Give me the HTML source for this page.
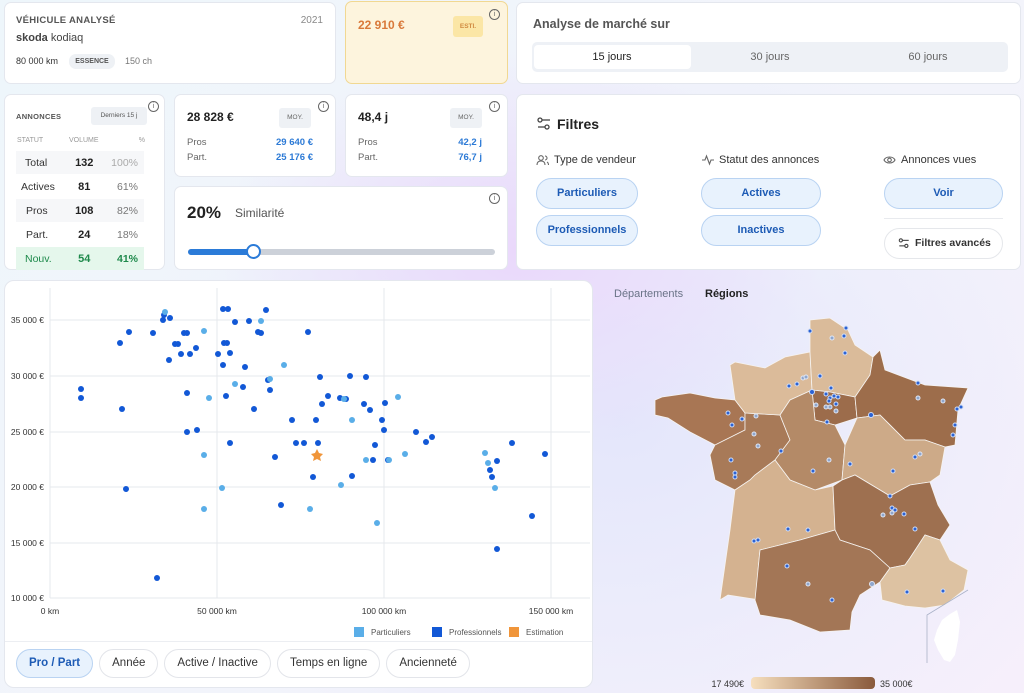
<!DOCTYPE html>
<html><head><meta charset="utf-8">
<style>
*{box-sizing:border-box;margin:0;padding:0}
body{width:1024px;height:693px;overflow:hidden;font-family:"Liberation Sans",sans-serif;color:#222;
background:radial-gradient(ellipse 300px 200px at 520px 250px,#ead8fb 0%,rgba(234,216,251,0) 100%),radial-gradient(ellipse 500px 400px at 620px 420px,#e4e6fb 0%,rgba(228,230,251,0) 100%),linear-gradient(135deg,#eef6fb 0%,#f3f4fb 60%,#f6effb 100%);position:relative}
.card{position:absolute;background:#fff;border:1px solid #e4e7ee;border-radius:7px}
.info{position:absolute;width:11px;height:11px;border:1.2px solid #666;border-radius:50%;font-size:7px;line-height:9px;text-align:center;color:#666}
.lbl{font-size:10px;font-weight:bold;color:#555;letter-spacing:.3px}
.pill{position:absolute;border:1.5px solid #b9d3f2;background:#e8f2fd;color:#1d5bb5;border-radius:16px;font-size:11px;font-weight:bold;text-align:center}
.chip{display:inline-block;border:1.5px solid #e3e5ea;border-radius:16px;font-size:11.5px;color:#333;padding:0 12px;height:29px;line-height:26px;margin-right:6px}
table td{font-size:10.5px;height:23px}
</style></head><body>

<div class="card" style="left:4px;top:2px;width:332px;height:82px">
 <div class="lbl" style="position:absolute;left:11px;top:12px;font-size:9.5px">VÉHICULE ANALYSÉ</div>
 <div style="position:absolute;right:12px;top:12px;font-size:10px;color:#888">2021</div>
 <div style="position:absolute;left:11px;top:29px;font-size:11px;color:#444"><b>skoda</b> kodiaq</div>
 <div style="position:absolute;left:11px;top:53px;font-size:9px;color:#333">80 000 km</div>
 <div style="position:absolute;left:64px;top:51px;height:15px;width:46px;background:#eef1f5;border-radius:7px;font-size:7px;font-weight:bold;color:#555;text-align:center;line-height:15px">ESSENCE</div>
 <div style="position:absolute;left:120px;top:53px;font-size:9px;color:#777">150 ch</div>
</div>
<div class="card" style="left:345px;top:1px;width:163px;height:83px;background:#fdf4dd;border-color:#f1d892">
 <div style="position:absolute;left:12px;top:16px;font-size:12px;font-weight:bold;color:#d9793a">22 910 €</div>
 <div style="position:absolute;left:107px;top:14px;width:30px;height:21px;background:#fbe6a6;border-radius:3px;font-size:6.5px;font-weight:bold;color:#d08a40;text-align:center;line-height:21px">ESTI.</div>
 <div class="info" style="left:143px;top:7px">i</div>
</div>
<div class="card" style="left:516px;top:2px;width:505px;height:82px">
 <div style="position:absolute;left:16px;top:14px;font-size:12.5px;color:#555;font-weight:bold">Analyse de marché sur</div>
 <div style="position:absolute;left:15px;top:39px;width:476px;height:30px;background:#eef1f6;border-radius:5px">
  <div style="position:absolute;left:2px;top:3px;width:157px;height:24px;background:#fff;border-radius:4px"></div>
  <div style="position:absolute;left:0;width:160px;top:9px;text-align:center;font-size:11px;color:#222">15 jours</div>
  <div style="position:absolute;left:158px;width:160px;top:9px;text-align:center;font-size:11px;color:#666">30 jours</div>
  <div style="position:absolute;left:316px;width:160px;top:9px;text-align:center;font-size:11px;color:#666">60 jours</div>
 </div>
</div>

<div class="card" style="left:4px;top:94px;width:161px;height:176px">
 <div class="lbl" style="position:absolute;left:11px;top:17px;font-size:7.5px">ANNONCES</div>
 <div style="position:absolute;left:86px;top:12px;width:56px;height:18px;background:#eef1f5;border-radius:3px;font-size:6.5px;color:#555;text-align:center;line-height:18px">Derniers 15 j</div>
 <div class="info" style="left:143px;top:6px">i</div>
 <div style="position:absolute;left:12px;top:42px;font-size:7px;color:#999;width:128px">STATUT<span style="position:absolute;left:52px">VOLUME</span><span style="position:absolute;right:0">%</span></div>
 <table style="position:absolute;left:11px;top:55px;width:128px;border-collapse:separate;border-spacing:0 1px">
  <tr style="background:#f6f7f9"><td style="padding-left:9px;color:#333">Total</td><td style="font-weight:bold;font-size:11px;text-align:center">132</td><td style="color:#aaa;text-align:right;padding-right:6px">100%</td></tr>
  <tr><td style="padding-left:5px;color:#333">Actives</td><td style="font-weight:bold;font-size:11px;text-align:center">81</td><td style="color:#777;text-align:right;padding-right:6px">61%</td></tr>
  <tr style="background:#f6f7f9"><td style="padding-left:10px;color:#333">Pros</td><td style="font-weight:bold;font-size:11px;text-align:center">108</td><td style="color:#777;text-align:right;padding-right:6px">82%</td></tr>
  <tr><td style="padding-left:10px;color:#333">Part.</td><td style="font-weight:bold;font-size:11px;text-align:center">24</td><td style="color:#777;text-align:right;padding-right:6px">18%</td></tr>
  <tr style="background:#e5f7ec;color:#1f8a4c"><td style="padding-left:9px">Nouv.</td><td style="font-weight:bold;font-size:11px;text-align:center">54</td><td style="text-align:right;padding-right:6px;font-weight:bold">41%</td></tr>
 </table>
</div>
<div class="card" style="left:174px;top:94px;width:162px;height:83px">
 <div style="position:absolute;left:12px;top:15px;font-size:12px;font-weight:bold">28 828 €</div>
 <div style="position:absolute;left:104px;top:13px;width:32px;height:20px;background:#eef1f5;border-radius:3px;font-size:6.5px;color:#666;text-align:center;line-height:20px">MOY.</div>
 <div class="info" style="left:143px;top:6px">i</div>
 <div style="position:absolute;left:12px;top:40px;font-size:9.5px;color:#666;line-height:15px">Pros<br>Part.</div>
 <div style="position:absolute;right:22px;top:40px;font-size:9.5px;color:#2c7ad6;font-weight:bold;line-height:15px;text-align:right">29 640 €<br>25 176 €</div>
</div>
<div class="card" style="left:345px;top:94px;width:163px;height:83px">
 <div style="position:absolute;left:12px;top:15px;font-size:12px;font-weight:bold">48,4 j</div>
 <div style="position:absolute;left:104px;top:13px;width:32px;height:20px;background:#eef1f5;border-radius:3px;font-size:6.5px;color:#666;text-align:center;line-height:20px">MOY.</div>
 <div class="info" style="left:143px;top:6px">i</div>
 <div style="position:absolute;left:12px;top:40px;font-size:9.5px;color:#666;line-height:15px">Pros<br>Part.</div>
 <div style="position:absolute;right:25px;top:40px;font-size:9.5px;color:#2c7ad6;font-weight:bold;line-height:15px;text-align:right">42,2 j<br>76,7 j</div>
</div>
<div class="card" style="left:174px;top:186px;width:334px;height:84px">
 <div style="position:absolute;left:12px;top:16px;font-size:17px;font-weight:bold">20%</div>
 <div style="position:absolute;left:60px;top:19px;font-size:12px;color:#555">Similarité</div>
 <div class="info" style="left:314px;top:6px">i</div>
 <div style="position:absolute;left:13px;top:62px;width:307px;height:6px;background:#ccd1d9;border-radius:3px"></div>
 <div style="position:absolute;left:13px;top:62px;width:68px;height:6px;background:#2b7bd8;border-radius:3px"></div>
 <div style="position:absolute;left:71px;top:57px;width:15px;height:15px;background:#fff;border:2px solid #2b7bd8;border-radius:50%"></div>
</div>

<div class="card" style="left:516px;top:94px;width:505px;height:176px">
 <svg style="position:absolute;left:20px;top:22px" width="14" height="14" viewBox="0 0 14 14" fill="none" stroke="#444" stroke-width="1.3"><circle cx="3" cy="3" r="2"/><line x1="5" y1="3" x2="13" y2="3"/><circle cx="10" cy="10" r="2"/><line x1="1" y1="10" x2="8" y2="10"/></svg>
 <div style="position:absolute;left:40px;top:21px;font-size:14px;font-weight:bold;color:#222">Filtres</div>
 <svg style="position:absolute;left:19px;top:59px" width="13" height="12" viewBox="0 0 13 12" fill="none" stroke="#666" stroke-width="1.1"><circle cx="5" cy="4" r="2.3"/><path d="M1 11c0-3 2-4 4-4s4 1 4 4"/><path d="M9 2a2 2 0 010 4M11 8c1 .5 1.5 1.5 1.5 3"/></svg>
 <div style="position:absolute;left:37px;top:59px;font-size:11px;color:#333">Type de vendeur</div>
 <svg style="position:absolute;left:185px;top:59px" width="12" height="12" viewBox="0 0 12 12" fill="none" stroke="#666" stroke-width="1.1"><path d="M0 6h3l1.5-4 3 8 1.5-4h3"/></svg>
 <div style="position:absolute;left:202px;top:59px;font-size:11px;color:#333">Statut des annonces</div>
 <svg style="position:absolute;left:366px;top:60px" width="13" height="10" viewBox="0 0 13 10" fill="none" stroke="#666" stroke-width="1.1"><path d="M1 5c2-4 9-4 11 0-2 4-9 4-11 0z"/><circle cx="6.5" cy="5" r="1.8"/></svg>
 <div style="position:absolute;left:384px;top:59px;font-size:11px;color:#333">Annonces vues</div>
 <div class="pill" style="left:19px;top:83px;width:102px;height:31px;line-height:28px">Particuliers</div>
 <div class="pill" style="left:19px;top:120px;width:102px;height:31px;line-height:28px">Professionnels</div>
 <div class="pill" style="left:184px;top:83px;width:120px;height:31px;line-height:28px">Actives</div>
 <div class="pill" style="left:184px;top:120px;width:120px;height:31px;line-height:28px">Inactives</div>
 <div class="pill" style="left:367px;top:83px;width:119px;height:31px;line-height:28px">Voir</div>
 <div style="position:absolute;left:367px;top:123px;width:119px;height:1px;background:#e8eaee"></div>
 <div style="position:absolute;left:367px;top:133px;width:119px;height:31px;border:1.5px solid #e5e7eb;border-radius:16px;font-size:10.5px;font-weight:bold;color:#333;line-height:28px;padding-left:30px">Filtres avancés</div>
 <svg style="position:absolute;left:381px;top:143px" width="12" height="11" viewBox="0 0 14 14" fill="none" stroke="#444" stroke-width="1.4"><circle cx="3" cy="3" r="2"/><line x1="5" y1="3" x2="13" y2="3"/><circle cx="10" cy="10" r="2"/><line x1="1" y1="10" x2="8" y2="10"/></svg>
</div>

<div class="card" style="left:4px;top:280px;width:589px;height:408px;border-radius:10px">
 <div style="position:absolute;left:0;right:0;top:360px;height:1px;background:#eceef2"></div>
 <div style="position:absolute;left:11px;top:368px;white-space:nowrap">
  <span class="chip" style="background:#e8f2fd;border-color:#b9d3f2;color:#1d5bb5;font-weight:bold">Pro / Part</span><span class="chip">Année</span><span class="chip">Active / Inactive</span><span class="chip">Temps en ligne</span><span class="chip">Ancienneté</span>
 </div>
</div>
<svg style="position:absolute;left:0;top:280px" width="600" height="360" viewBox="0 280 600 360" font-family="Liberation Sans" font-size="8.5" fill="#333">
 <g stroke="#e6e8ec" stroke-width="1">
  <line x1="50" y1="320" x2="590" y2="320"/><line x1="50" y1="376" x2="590" y2="376"/><line x1="50" y1="432" x2="590" y2="432"/><line x1="50" y1="487" x2="590" y2="487"/><line x1="50" y1="543" x2="590" y2="543"/><line x1="50" y1="598" x2="590" y2="598"/>
  <line x1="50" y1="288" x2="50" y2="598"/><line x1="217" y1="288" x2="217" y2="598"/><line x1="384" y1="288" x2="384" y2="598"/><line x1="551" y1="288" x2="551" y2="598"/>
 </g>
 <g text-anchor="end"><text x="44" y="323">35 000 €</text><text x="44" y="379">30 000 €</text><text x="44" y="435">25 000 €</text><text x="44" y="490">20 000 €</text><text x="44" y="546">15 000 €</text><text x="44" y="601">10 000 €</text></g>
 <g text-anchor="middle"><text x="50" y="614">0 km</text><text x="217" y="614">50 000 km</text><text x="384" y="614">100 000 km</text><text x="551" y="614">150 000 km</text></g>
 <g fill="#1258d6">
  <circle cx="81" cy="389" r="3"/><circle cx="81" cy="398" r="3"/><circle cx="120" cy="343" r="3"/><circle cx="129" cy="332" r="3"/><circle cx="122" cy="409" r="3"/><circle cx="126" cy="489" r="3"/><circle cx="157" cy="578" r="3"/><circle cx="153" cy="333" r="3"/><circle cx="163" cy="320" r="3"/><circle cx="164" cy="315" r="3"/><circle cx="170" cy="318" r="3"/><circle cx="175" cy="344" r="3"/><circle cx="178" cy="344" r="3"/><circle cx="184" cy="333" r="3"/><circle cx="187" cy="333" r="3"/><circle cx="181" cy="354" r="3"/><circle cx="190" cy="354" r="3"/><circle cx="169" cy="360" r="3"/><circle cx="196" cy="348" r="3"/><circle cx="223" cy="309" r="3"/><circle cx="228" cy="309" r="3"/><circle cx="187" cy="393" r="3"/><circle cx="187" cy="432" r="3"/><circle cx="197" cy="430" r="3"/><circle cx="218" cy="354" r="3"/><circle cx="224" cy="343" r="3"/><circle cx="227" cy="343" r="3"/><circle cx="230" cy="353" r="3"/><circle cx="223" cy="365" r="3"/><circle cx="226" cy="396" r="3"/><circle cx="243" cy="387" r="3"/><circle cx="235" cy="322" r="3"/><circle cx="261" cy="333" r="3"/><circle cx="266" cy="310" r="3"/><circle cx="258" cy="332" r="3"/><circle cx="249" cy="321" r="3"/><circle cx="254" cy="409" r="3"/><circle cx="245" cy="367" r="3"/><circle cx="230" cy="443" r="3"/><circle cx="270" cy="390" r="3"/><circle cx="268" cy="380" r="3"/><circle cx="275" cy="457" r="3"/><circle cx="292" cy="420" r="3"/><circle cx="296" cy="443" r="3"/><circle cx="304" cy="443" r="3"/><circle cx="281" cy="505" r="3"/><circle cx="308" cy="332" r="3"/><circle cx="318" cy="443" r="3"/><circle cx="313" cy="477" r="3"/><circle cx="320" cy="377" r="3"/><circle cx="316" cy="420" r="3"/><circle cx="322" cy="404" r="3"/><circle cx="328" cy="396" r="3"/><circle cx="340" cy="398" r="3"/><circle cx="350" cy="376" r="3"/><circle cx="346" cy="399" r="3"/><circle cx="352" cy="476" r="3"/><circle cx="366" cy="377" r="3"/><circle cx="364" cy="404" r="3"/><circle cx="370" cy="410" r="3"/><circle cx="375" cy="445" r="3"/><circle cx="382" cy="420" r="3"/><circle cx="373" cy="460" r="3"/><circle cx="385" cy="403" r="3"/><circle cx="388" cy="460" r="3"/><circle cx="384" cy="430" r="3"/><circle cx="416" cy="432" r="3"/><circle cx="426" cy="442" r="3"/><circle cx="432" cy="437" r="3"/><circle cx="490" cy="470" r="3"/><circle cx="492" cy="477" r="3"/><circle cx="497" cy="461" r="3"/><circle cx="512" cy="443" r="3"/><circle cx="532" cy="516" r="3"/><circle cx="545" cy="454" r="3"/><circle cx="497" cy="549" r="3"/>
 </g>
 <g fill="#5aaee8">
  <circle cx="165" cy="312" r="3"/><circle cx="204" cy="331" r="3"/><circle cx="261" cy="321" r="3"/><circle cx="270" cy="379" r="3"/><circle cx="284" cy="365" r="3"/><circle cx="209" cy="398" r="3"/><circle cx="204" cy="455" r="3"/><circle cx="222" cy="488" r="3"/><circle cx="204" cy="509" r="3"/><circle cx="310" cy="509" r="3"/><circle cx="341" cy="485" r="3"/><circle cx="352" cy="420" r="3"/><circle cx="366" cy="460" r="3"/><circle cx="389" cy="460" r="3"/><circle cx="398" cy="397" r="3"/><circle cx="405" cy="454" r="3"/><circle cx="377" cy="523" r="3"/><circle cx="485" cy="453" r="3"/><circle cx="488" cy="463" r="3"/><circle cx="495" cy="488" r="3"/><circle cx="235" cy="384" r="3"/><circle cx="344" cy="399" r="3"/>
 </g>
 <polygon points="317,449 319,453 323,454 320,457 321,461 317,459 313,461 314,457 311,454 315,453" fill="#f0953a"/>
 <rect x="354" y="627" width="10" height="10" fill="#5aaee8"/><text x="371" y="635" fill="#555" font-size="8">Particuliers</text>
 <rect x="432" y="627" width="10" height="10" fill="#1258d6"/><text x="449" y="635" fill="#555" font-size="8">Professionnels</text>
 <rect x="509" y="627" width="10" height="10" fill="#f0953a"/><text x="526" y="635" fill="#555" font-size="8">Estimation</text>
</svg>

<div style="position:absolute;left:614px;top:288px;font-size:11px;color:#6a7387">Départements</div>
<div style="position:absolute;left:705px;top:288px;font-size:11px;color:#222;font-weight:bold">Régions</div>
<svg style="position:absolute;left:600px;top:300px" width="424" height="393" viewBox="600 300 424 393">
 <g stroke="#f6f3f0" stroke-width="0.8">
 <polygon fill="#a87654" points="655,400 662,397 690,393 715,398 735,400 745,413 745,430 715,445 690,432 668,418 655,415"/>
 <polygon fill="#a87a58" points="745,413 780,415 790,440 775,460 755,475 750,480 735,490 715,480 710,455 715,445 745,430"/>
 <polygon fill="#dbbb9a" points="730,365 735,362 765,368 785,357 810,352 812,390 790,400 780,415 745,413 735,400"/>
 <polygon fill="#dabb9a" points="810,320 830,318 848,330 855,345 873,357 870,375 855,397 830,392 812,390 810,352"/>
 <polygon fill="#9c6c4b" points="812,390 830,392 855,397 857,418 835,425 815,420"/>
 <polygon fill="#9d6d4b" points="873,357 880,350 885,370 925,385 968,388 958,410 955,445 945,447 925,440 905,440 880,415 857,418 855,397 870,375"/>
 <polygon fill="#b48a67" points="790,400 812,390 815,420 835,425 845,445 842,480 815,490 790,480 775,460 790,440 780,415"/>
 <polygon fill="#cdaa88" points="842,480 845,445 857,418 880,415 905,440 925,440 945,447 940,475 930,482 910,485 890,496 880,490 855,475"/>
 <polygon fill="#d4b290" points="735,490 750,480 755,475 775,460 790,480 815,490 833,486 835,530 800,540 760,550 758,570 760,600 728,595 720,600 730,530"/>
 <polygon fill="#9e7050" points="833,486 842,480 855,475 880,490 890,496 910,485 930,482 938,505 950,525 940,540 925,535 910,558 905,565 890,568 870,550 840,540 835,530"/>
 <polygon fill="#a37656" points="760,550 800,540 835,530 840,540 870,550 890,568 880,582 860,595 852,612 850,630 820,632 790,620 760,615 755,600 758,570"/>
 <polygon fill="#ddc2a2" points="905,565 910,558 925,535 940,540 950,560 968,570 964,590 945,605 925,608 905,606 882,600 880,582 890,568"/>
 </g>
 <polygon fill="#fff" points="957,610 960,622 958,640 955,655 950,662 944,660 938,650 934,640 937,630 942,620 950,614"/>
 <polyline fill="none" stroke="#aab2c8" stroke-width="0.8" points="927,663 927,615 968,590"/>
 <g fill="#2b62d4" stroke="#d0dcf4" stroke-width="1">
  <circle cx="810" cy="331" r="2"/><circle cx="846" cy="328" r="2"/><circle cx="844" cy="336" r="2"/><circle cx="845" cy="353" r="2"/><circle cx="797" cy="384" r="2"/><circle cx="789" cy="386" r="2"/><circle cx="820" cy="376" r="2"/><circle cx="831" cy="388" r="2"/><circle cx="826" cy="394" r="2"/><circle cx="830" cy="398" r="2"/><circle cx="834" cy="396" r="2"/><circle cx="838" cy="397" r="2"/><circle cx="829" cy="401" r="2"/><circle cx="836" cy="404" r="2"/><circle cx="827" cy="422" r="2"/><circle cx="812" cy="392" r="2.5"/><circle cx="871" cy="415" r="2.5"/><circle cx="918" cy="383" r="2"/><circle cx="961" cy="407" r="2"/><circle cx="955" cy="425" r="2"/><circle cx="953" cy="435" r="2"/><circle cx="742" cy="419" r="2"/><circle cx="728" cy="413" r="2"/><circle cx="732" cy="425" r="2"/><circle cx="731" cy="460" r="2"/><circle cx="735" cy="473" r="2"/><circle cx="735" cy="477" r="2"/><circle cx="781" cy="451" r="2"/><circle cx="813" cy="471" r="2"/><circle cx="850" cy="464" r="2"/><circle cx="893" cy="471" r="2"/><circle cx="915" cy="457" r="2"/><circle cx="890" cy="496" r="2"/><circle cx="892" cy="508" r="2"/><circle cx="895" cy="510" r="2"/><circle cx="904" cy="514" r="2"/><circle cx="915" cy="529" r="2"/><circle cx="788" cy="529" r="2"/><circle cx="808" cy="530" r="2"/><circle cx="754" cy="541" r="2"/><circle cx="758" cy="540" r="2"/><circle cx="787" cy="566" r="2"/><circle cx="832" cy="600" r="2"/><circle cx="907" cy="592" r="2"/><circle cx="943" cy="591" r="2"/><circle cx="957" cy="409" r="2"/>
 </g>
 <g fill="#8fa6cc" stroke="#e0e6f4" stroke-width="1">
  <circle cx="832" cy="338" r="2"/><circle cx="803" cy="378" r="2"/><circle cx="806" cy="377" r="2"/><circle cx="816" cy="405" r="2"/><circle cx="826" cy="407" r="2"/><circle cx="830" cy="407" r="2"/><circle cx="836" cy="411" r="2"/><circle cx="918" cy="398" r="2"/><circle cx="943" cy="401" r="2"/><circle cx="756" cy="416" r="2"/><circle cx="754" cy="434" r="2"/><circle cx="758" cy="446" r="2"/><circle cx="829" cy="460" r="2"/><circle cx="920" cy="454" r="2"/><circle cx="883" cy="515" r="2"/><circle cx="892" cy="513" r="2"/><circle cx="808" cy="584" r="2"/><circle cx="872" cy="584" r="2.5"/>
 </g>
 <text x="744" y="687" font-family="Liberation Sans" font-size="9" fill="#333" text-anchor="end">17 490€</text>
 <defs><linearGradient id="lg"><stop offset="0" stop-color="#f6dfbe"/><stop offset="1" stop-color="#8a5a3c"/></linearGradient></defs>
 <rect x="751" y="677" width="124" height="12" rx="4" fill="url(#lg)"/>
 <text x="880" y="687" font-family="Liberation Sans" font-size="9" fill="#333">35 000€</text>
</svg>
</body></html>
